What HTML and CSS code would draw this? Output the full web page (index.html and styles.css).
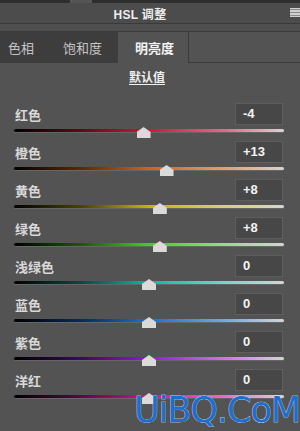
FILE: index.html
```html
<!DOCTYPE html>
<html lang="zh">
<head>
<meta charset="utf-8">
<link rel="stylesheet" href="styles.css">
</head>
<body>
<div class="panel">
  <div class="topstrip"><span class="topseg"></span></div>
  <div class="titlebar">
    <span class="title">HSL 调整</span>
    <span class="menu"><i></i><i></i><i></i></span>
  </div>
  <div class="gapbar"></div>
  <div class="tabs">
    <div class="tab">色相</div>
    <div class="tab">饱和度</div>
    <div class="tab active">明亮度</div>
    <div class="tabfill"></div>
  </div>
  <div class="default"><span>默认值</span></div>
  <div class="rows">
    <div class="row">
      <div class="head"><span class="label">红色</span><span class="val">-4</span></div>
      <div class="track red"><span class="thumb" style="left:48%"></span></div>
    </div>
    <div class="row">
      <div class="head"><span class="label">橙色</span><span class="val">+13</span></div>
      <div class="track orange"><span class="thumb" style="left:56.5%"></span></div>
    </div>
    <div class="row">
      <div class="head"><span class="label">黄色</span><span class="val">+8</span></div>
      <div class="track yellow"><span class="thumb" style="left:54%"></span></div>
    </div>
    <div class="row">
      <div class="head"><span class="label">绿色</span><span class="val">+8</span></div>
      <div class="track green"><span class="thumb" style="left:54%"></span></div>
    </div>
    <div class="row">
      <div class="head"><span class="label">浅绿色</span><span class="val">0</span></div>
      <div class="track aqua"><span class="thumb" style="left:50%"></span></div>
    </div>
    <div class="row">
      <div class="head"><span class="label">蓝色</span><span class="val">0</span></div>
      <div class="track blue"><span class="thumb" style="left:50%"></span></div>
    </div>
    <div class="row">
      <div class="head"><span class="label">紫色</span><span class="val">0</span></div>
      <div class="track purple"><span class="thumb" style="left:50%"></span></div>
    </div>
    <div class="row">
      <div class="head"><span class="label">洋红</span><span class="val">0</span></div>
      <div class="track magenta"><span class="thumb" style="left:50%"></span></div>
    </div>
  </div>
  <div class="watermark">UiBQ.CoM</div>
</div>
</body>
</html>
```

FILE: styles.css
```css
* { box-sizing: border-box; }
html, body { margin: 0; padding: 0; }
body {
  width: 300px;
  height: 431px;
  overflow: hidden;
  background: #535353;
  font-family: "Noto Sans CJK SC", "Liberation Sans", sans-serif;
  color: #dcdcdc;
}
.panel {
  position: relative;
  width: 300px;
  height: 431px;
  background: #535353;
}
.topstrip {
  height: 3px;
  background: #2e2e2e;
  position: relative;
}
.topseg {
  display: block;
  margin-left: 70px;
  width: 22px;
  height: 3px;
  background: #555;
}
.titlebar {
  height: 21px;
  background: #4c4c4c;
  border-bottom: 1px solid #3a3a3a;
  display: flex;
  align-items: center;
  justify-content: center;
  position: relative;
  padding-right: 20px;
}
.title {
  font-family: "Liberation Sans", "Noto Sans CJK SC", sans-serif;
  font-weight: bold;
  font-size: 12px;
  color: #ececec;
  letter-spacing: 0.3px;
}
.menu {
  position: absolute;
  right: 0;
  top: 5px;
  width: 10px;
  height: 9px;
  display: flex;
  flex-direction: column;
  justify-content: space-between;
  background: #cfcfcf;
  padding: 1px 0;
}
.menu i {
  display: block;
  height: 1px;
  background: #8a8a8a;
}
.gapbar {
  height: 8px;
  background: #4f4f4f;
  border-bottom: 1px solid #3b3b3b;
}
.tabs {
  height: 31px;
  display: flex;
  background: #3d3d3d;
}
.tab {
  font-size: 13px;
  line-height: 31px;
  color: #c4c4c4;
  padding: 0 8px;
  width: 59px;
}
.tab:first-child { width: 59px; }
.tab:nth-child(2) { width: 59px; padding-left: 4px; }
.tab.active {
  width: 70px;
  background: #535353;
  color: #f2f2f2;
  font-weight: bold;
  padding-left: 17px;
}
.tabfill {
  flex: 1;
  background: #535353;
  border-left: 1px solid #3a3a3a;
  border-bottom: 1px solid #3a3a3a;
}
.default {
  height: 40px;
  display: flex;
  justify-content: center;
  padding-top: 4px;
  padding-right: 6px;
}
.default span {
  font-size: 12px;
  font-weight: bold;
  color: #efefef;
  text-decoration: underline;
  text-underline-offset: 2px;
  line-height: 20px;
}
.rows {
  display: flex;
  flex-direction: column;
  padding: 0 16px 0 14px;
}
.row {
  height: 38px;
}
.head {
  height: 22px;
  display: flex;
  justify-content: space-between;
  align-items: center;
}
.label {
  font-size: 13px;
  font-weight: bold;
  color: #d8d8d8;
  padding-left: 1px;
}
.val {
  width: 48px;
  height: 22px;
  background: #474747;
  border: 1px solid #5e5e5e;
  font-family: "Liberation Sans", sans-serif;
  font-weight: bold;
  font-size: 13px;
  color: #f4f4f4;
  line-height: 20px;
  padding-left: 7px;
  margin-right: 1px;
}
.track {
  position: relative;
  margin-top: 4px;
  height: 3px;
  border-radius: 2px;
  box-shadow: 0 1px 0 #666;
}
.thumb {
  position: absolute;
  top: -2px;
  width: 14px;
  height: 11px;
  margin-left: -7px;
  background: #dadada;
  clip-path: polygon(50% 0, 100% 45%, 100% 100%, 0 100%, 0 45%);
}
.red { background: linear-gradient(90deg, #000 0%, #5c0b16 25%, #d4143c 50%, #e06a8a 78%, #d4d4d4 100%); }
.orange { background: linear-gradient(90deg, #000 0%, #5a2a06 25%, #d86010 50%, #e0a070 78%, #d4d4d4 100%); }
.yellow { background: linear-gradient(90deg, #000 0%, #4a4200 25%, #c8b400 50%, #d8d070 78%, #d4d4d4 100%); }
.green { background: linear-gradient(90deg, #000 0%, #1a5a08 25%, #40d020 50%, #90e080 78%, #d4d4d4 100%); }
.aqua { background: linear-gradient(90deg, #000 0%, #0a4a40 25%, #10b8a0 50%, #70d8c8 78%, #d4d4d4 100%); }
.blue { background: linear-gradient(90deg, #000 0%, #0a2a5a 25%, #1a70d8 50%, #70a8e0 78%, #d4d4d4 100%); }
.purple { background: linear-gradient(90deg, #000 0%, #3a0a5a 25%, #a010e0 50%, #d070f0 78%, #d4d4d4 100%); }
.magenta { background: linear-gradient(90deg, #000 0%, #5a0a40 25%, #d010a0 50%, #e070c8 78%, #d4d4d4 100%); }
.watermark {
  position: absolute;
  right: 0;
  bottom: 1px;
  font-family: "DejaVu Sans", sans-serif;
  font-size: 35px;
  color: #1b6fd2;
  letter-spacing: -1px;
  -webkit-text-stroke: 0.5px #ffffff;
  paint-order: stroke fill;
  line-height: 40px;
}
```
